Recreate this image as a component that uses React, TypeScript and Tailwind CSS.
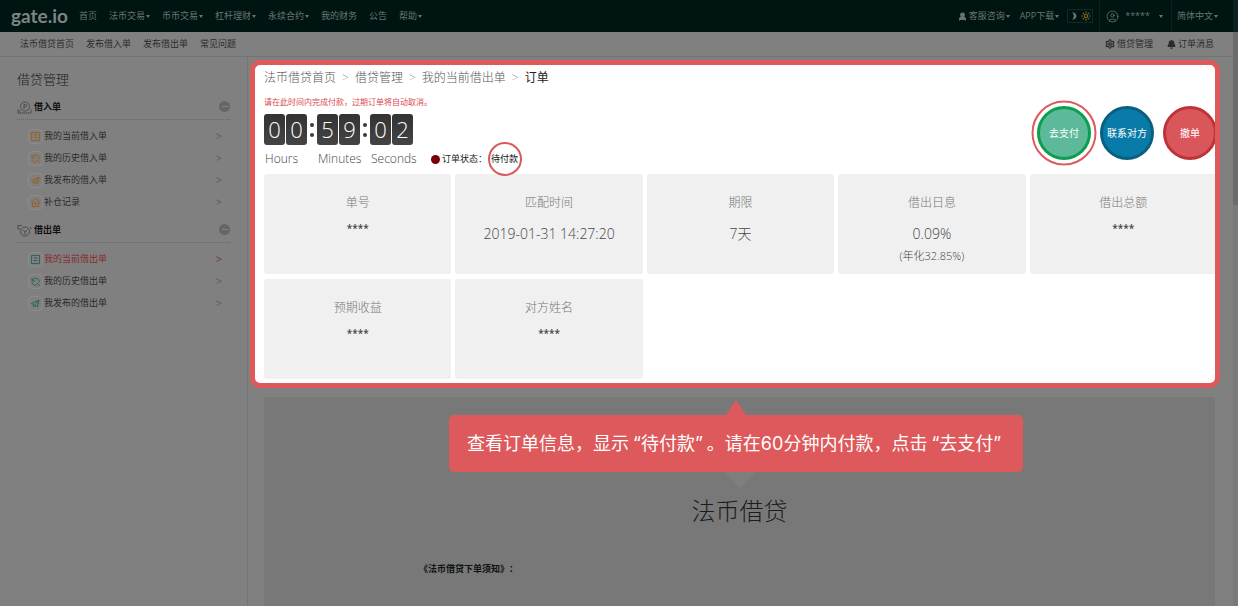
import React from "react";
import { Bell, Settings, Sun, CircleUser, UserRound } from "lucide-react";

const font = "font-['Open_Sans','Noto_Sans_CJK_SC',sans-serif]";

function Caret() {
  return <span className="ml-px inline-block border-x-2 border-t-[3px] border-x-transparent border-t-current" />;
}

function Logo() {
  return (
    <a href="#" aria-label="gate.io" className="w-[68px] font-['Lato',sans-serif] text-[19px] leading-8 font-bold text-[#7d8584]">
      gate.io
    </a>
  );
}

const nav: [string, boolean][] = [
  ["首页", false],
  ["法币交易", true],
  ["币币交易", true],
  ["杠杆理财", true],
  ["永续合约", true],
  ["我的财务", false],
  ["公告", false],
  ["帮助", true],
];

function Header() {
  return (
    <header className="flex h-8 items-center border-r-[5px] border-[#0d211e] bg-[#001512] pl-[11px] text-[9px] text-[#6b7473]">
      <Logo />
      <nav className="flex items-center gap-3">
        {nav.map(([label, menu]) => (
          <a key={label} href="#" className="flex items-center whitespace-nowrap">
            {label}
            {menu && <Caret />}
          </a>
        ))}
      </nav>
      <div className="ml-auto flex h-full items-center whitespace-nowrap">
        <a href="#" className="flex items-center">
          <UserRound size={9} strokeWidth={3} className="mr-0.5 fill-current" />
          客服咨询
          <Caret />
        </a>
        <a href="#" className="ml-2.5 flex items-center">
          APP下载
          <Caret />
        </a>
        <button aria-label="主题" className="mr-1.5 ml-2 flex h-3.5 w-[26px] items-center justify-around border border-[#14282a]">
          <svg viewBox="0 0 8 8" className="size-2" fill="currentColor">
            <path d="M2 .5a3.600 3.600 0 1 1 0 7 4.200 4.200 0 0 0 0-7z" />
          </svg>
          <Sun size={10} strokeWidth={2.5} className="text-[#8a6a20]" />
        </button>
        <a href="#" className="flex h-full items-center border-l border-[#0b211e] pl-1.5">
          <CircleUser size={13} strokeWidth={1.5} className="mr-1.5" />
          *****
          <span className="ml-2 flex">
            <Caret />
          </span>
        </a>
        <a href="#" className="ml-2 flex h-full items-center border-l border-[#0b211e] pr-[15px] pl-[5px]">
          简体中文
          <Caret />
        </a>
      </div>
    </header>
  );
}

function SubNav() {
  return (
    <div className="flex h-[25px] items-center border-b border-[#747474] pr-[19px] pl-5 text-[9px] text-[#2b2b2b]">
      <nav className="flex gap-3">
        {["法币借贷首页", "发布借入单", "发布借出单", "常见问题"].map((t) => (
          <a key={t} href="#">
            {t}
          </a>
        ))}
      </nav>
      <a href="#" className="ml-auto flex items-center gap-0.5">
        <Settings size={10} strokeWidth={3} />
        借贷管理
      </a>
      <a href="#" className="ml-3.5 flex items-center gap-0.5">
        <Bell size={9} strokeWidth={3} className="fill-current" />
        订单消息
      </a>
    </div>
  );
}

type Glyph = "list" | "history" | "send" | "home";

function ItemIcon({ kind, tone }: { kind: Glyph; tone: string }) {
  return (
    <svg viewBox="0 0 15 15" className={"size-[15px] " + tone} fill="none" stroke="currentColor">
      <rect x="0.5" y="0.5" width="14" height="14" rx="4" stroke="#8c8c8c" />
      {kind === "list" && <path d="M3.500 3.500h8v8h-8zM5.500 6h4M5.500 8.500h4" />}
      {kind === "history" && <path d="M4 4v3h3M4 6.500a3.800 3.800 0 0 1 7 0v2M4 8.500a3.800 3.800 0 0 0 5 2.500M9 9l3 3" />}
      {kind === "send" && <path d="M3.500 7.500 11 4 9.500 11 7 9 5.500 11V8.500zM7 9l4-5" />}
      {kind === "home" && <path d="M3 7.500 7.500 3.500 12 7.500M4.500 7v4.500h6V7M7.500 7v3M6.300 8.500h2.400" />}
    </svg>
  );
}

function GroupIcon({ out }: { out?: boolean }) {
  return (
    <svg viewBox="0 0 15 13" className="h-[13px] w-[15px] text-[#4c4c4c]" fill="none" stroke="currentColor">
      <circle cx="8" cy={out ? 7.5 : 5.5} r="4.500" />
      {out ? (
        <path d="M1 1v4h2M1 1.500h4M6 6l2 2 2-2M8 8v2.500M13 3l1.500 2" />
      ) : (
        <path d="M1 8.500v3.500h13V8.500M1 9l2.500 1.500M7 8V3.500h1.500a1 1 0 0 1 0 2.300H7" />
      )}
    </svg>
  );
}

function Group({ title, out, items }: { title: string; out?: boolean; items: [Glyph, string, boolean][] }) {
  return (
    <section>
      <h3 className="flex h-[27px] items-center border-b border-dotted border-[#666] pt-0.5 text-[9px] font-bold text-[#111]">
        <GroupIcon out={out} />
        <span className="ml-0.5">{title}</span>
        <button aria-label="收起" className="mb-0.5 ml-auto flex size-[11px] items-center justify-center rounded-full bg-[#666]">
          <span className="h-px w-1.5 bg-[#808080]" />
        </button>
      </h3>
      <ul className="mt-[5px] text-[9px]">
        {items.map(([kind, label, active]) => (
          <li key={label}>
            <a href="#" className={"flex h-[22px] items-center pr-2 pl-[11px] " + (active ? "text-[#8a2b2e]" : "text-[#2b2b2b]")}>
              <ItemIcon kind={kind} tone={out ? "text-[#2c6457]" : "text-[#9a5f22]"} />
              <span className="ml-px">{label}</span>
              <span className={"ml-auto text-[11px] " + (active ? "text-[#6b3435]" : "text-[#5c5c5c]")}>&gt;</span>
            </a>
          </li>
        ))}
      </ul>
    </section>
  );
}

function Sidebar() {
  return (
    <aside className="w-[248px] shrink-0 border-r border-[#747474] pt-3 pr-[17px] pl-[17px]">
      <h2 className="mb-1 text-[13px] leading-5 font-light text-[#222]">借贷管理</h2>
      <Group
        title="借入单"
        items={[
          ["list", "我的当前借入单", false],
          ["history", "我的历史借入单", false],
          ["send", "我发布的借入单", false],
          ["home", "补仓记录", false],
        ]}
      />
      <div className="h-[3px]" />
      <Group
        title="借出单"
        out
        items={[
          ["list", "我的当前借出单", true],
          ["history", "我的历史借出单", false],
          ["send", "我发布的借出单", false],
        ]}
      />
    </aside>
  );
}

function Digits({ value, label }: { value: string; label: string }) {
  return (
    <div className="w-[43px]">
      <div className="flex gap-px">
        {value.split("").map((d, i) => (
          <span
            key={i}
            className="flex h-[31px] w-[21px] items-center justify-center rounded-[3px] bg-linear-to-b from-[#333] to-[#444] text-[22px] font-light text-white"
          >
            {d}
          </span>
        ))}
      </div>
      <div className="mt-[5px] pl-px text-[12px] leading-[18px] font-light whitespace-nowrap text-[#444]">{label}</div>
    </div>
  );
}

function Colon() {
  return (
    <div className="flex h-[31px] w-2.5 flex-col items-center justify-center gap-1.5">
      <span className="size-1 rounded-full bg-[#3a3a3a]" />
      <span className="size-1 rounded-full bg-[#3a3a3a]" />
    </div>
  );
}

function Card({ label, value, note }: { label: string; value: string; note?: string }) {
  const masked = value === "****";
  return (
    <div className="h-[100px] rounded-[3px] bg-[#f0f0f0] pt-5 text-center">
      <div className="text-[12px] leading-[18px] font-light text-[#777]">{label}</div>
      <div className={masked ? "mt-1.5 text-[10px] leading-5 font-semibold text-[#444]" : "mt-3 text-[14px] leading-5 font-light text-[#444]"}>{value}</div>
      {note && <div className="mt-[3px] text-[11px] leading-[18px] font-light text-[#444]">{note}</div>}
    </div>
  );
}

function OrderPanel() {
  const round = "flex size-[54px] items-center justify-center rounded-full border-[3px] text-[10px] text-white";
  return (
    <section className="h-[328px] overflow-hidden rounded-[10px] border-[5px] border-[#de595b] bg-white pl-[9px]">
      <nav className="flex h-[25px] items-center gap-1.5 text-[12px] font-light text-[#555]">
        <a href="#">法币借贷首页</a>
        <span className="text-[#999]">&gt;</span>
        <a href="#">借贷管理</a>
        <span className="text-[#999]">&gt;</span>
        <a href="#">我的当前借出单</a>
        <span className="text-[#999]">&gt;</span>
        <span className="font-normal text-[#222]">订单</span>
      </nav>
      <div className="flex h-[84px] justify-between">
        <div>
          <p className="my-1.5 text-[8px] leading-3 text-[#d9484c]">请在此时间内完成付款，过期订单将自动取消。</p>
          <div className="flex items-end">
            <div className="flex items-start">
              <Digits value="00" label="Hours" />
              <Colon />
              <Digits value="59" label="Minutes" />
              <Colon />
              <Digits value="02" label="Seconds" />
            </div>
            <div className="flex h-[18px] items-center pl-[18px] text-[9px] text-[#222]">
              <span className="mr-0.5 size-[9px] rounded-full bg-[#7a0008]" />
              订单状态：
              <span className="relative ml-1 text-[#111]">
                待付款
                <span className="absolute top-1/2 left-1/2 size-[34px] -translate-1/2 rounded-full border-2 border-[#d9595c]" />
              </span>
            </div>
          </div>
        </div>
        <div className="-mr-0.5 flex shrink-0 items-center gap-[9px] pt-0.5">
          <button className={"relative border-[#0a9f4e] bg-[#5cb99a] " + round}>
            去支付
            <span className="absolute top-1/2 left-1/2 size-[65px] -translate-1/2 rounded-full border-2 border-[#de595b]" />
          </button>
          <button className={"border-[#0a5f80] bg-[#087ba8] " + round}>联系对方</button>
          <button className={"border-[#bd3338] bg-[#d9575b] " + round}>撤单</button>
        </div>
      </div>
      <div className="-mr-0.5 grid grid-cols-5 gap-x-1 gap-y-[5px]">
        <Card label="单号" value="****" />
        <Card label="匹配时间" value="2019-01-31 14:27:20" />
        <Card label="期限" value="7天" />
        <Card label="借出日息" value="0.09%" note="(年化32.85%)" />
        <Card label="借出总额" value="****" />
        <Card label="预期收益" value="****" />
        <Card label="对方姓名" value="****" />
      </div>
    </section>
  );
}

function Callout() {
  return (
    <div className="absolute top-[3px] left-[185px] flex flex-col items-center">
      <span className="border-x-[10px] border-b-[15px] border-x-transparent border-b-[#de595b]" />
      <p className="rounded-[5px] bg-[#de595b] px-[18px] py-[15px] font-['Inter','Noto_Sans_CJK_SC',sans-serif] text-[18px] leading-[27px] whitespace-nowrap text-white">
        查看订单信息，显示<span className="mx-1">“待付款”</span>。请在60分钟内付款，点击<span className="mx-1">“去支付”</span>
      </p>
    </div>
  );
}

export default function App() {
  return (
    <div lang="zh-CN" className={"flex h-screen flex-col overflow-hidden bg-[#808080] " + font}>
      <Header />
      <div className="flex min-h-0 flex-1">
        <div className="flex min-w-0 flex-1 flex-col">
          <SubNav />
          <div className="flex min-h-0 flex-1">
            <Sidebar />
            <main className="flex min-w-0 flex-1 flex-col pt-[3px] pr-[13px] pl-0.5">
              <OrderPanel />
              <section className="relative mt-[9px] mr-[5px] ml-3.5 flex-1 bg-[#787878]">
                <span className="absolute top-[75px] left-1/2 -translate-x-1/2 border-x-[16px] border-t-[16px] border-x-transparent border-t-[#7f7f7f]" />
                <Callout />
                <h1 className="mt-24 text-center text-[24px] leading-9 font-light text-[#1c1c1c]">法币借贷</h1>
                <p className="mt-8 ml-[155px] text-[9px] leading-4 font-bold text-[#111] [text-spacing-trim:space-all]">《法币借贷下单须知》：</p>
              </section>
            </main>
          </div>
        </div>
        <div className="w-[5px] bg-[#7a7a7a]">
          <div className="h-[173px] bg-[#6c6c6c]" />
        </div>
      </div>
    </div>
  );
}
